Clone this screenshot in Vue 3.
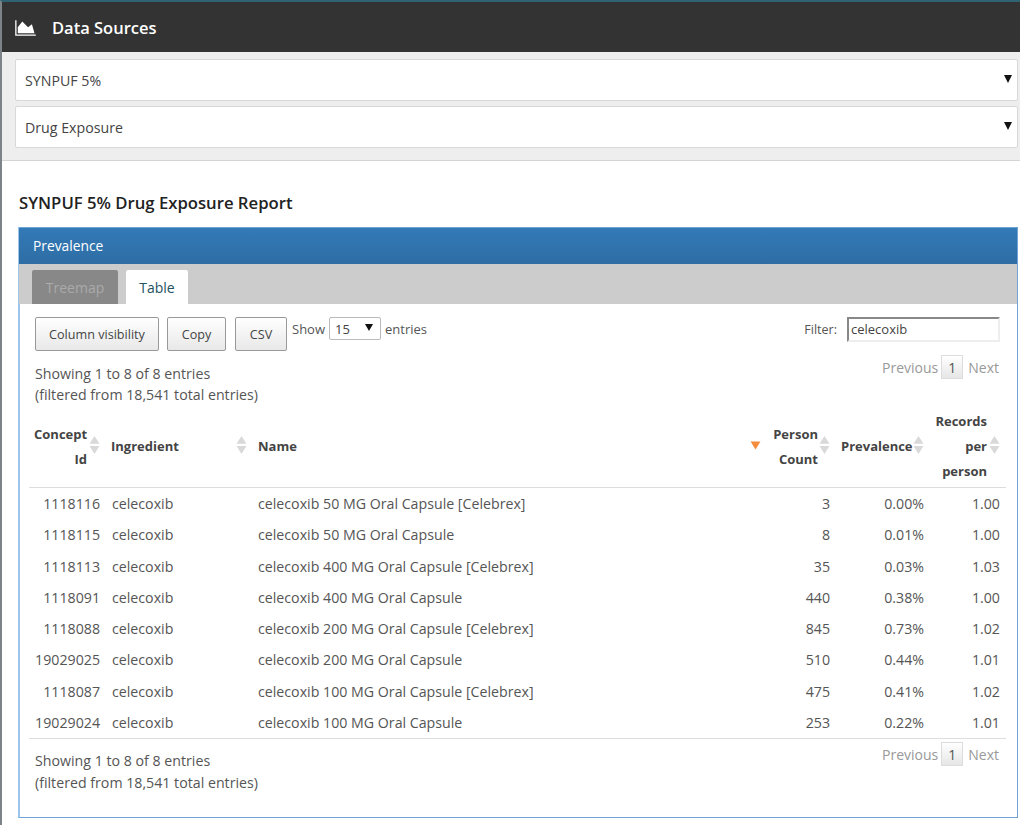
<script setup>
import { ref } from "vue";

// Report rows
const rows = ref([
  { id: 1118116, name: "celecoxib 50 MG Oral Capsule [Celebrex]", count: 3, prev: "0.00%", rec: "1.00" },
  { id: 1118115, name: "celecoxib 50 MG Oral Capsule", count: 8, prev: "0.01%", rec: "1.00" },
  { id: 1118113, name: "celecoxib 400 MG Oral Capsule [Celebrex]", count: 35, prev: "0.03%", rec: "1.03" },
  { id: 1118091, name: "celecoxib 400 MG Oral Capsule", count: 440, prev: "0.38%", rec: "1.00" },
  { id: 1118088, name: "celecoxib 200 MG Oral Capsule [Celebrex]", count: 845, prev: "0.73%", rec: "1.02" },
  { id: 19029025, name: "celecoxib 200 MG Oral Capsule", count: 510, prev: "0.44%", rec: "1.01" },
  { id: 1118087, name: "celecoxib 100 MG Oral Capsule [Celebrex]", count: 475, prev: "0.41%", rec: "1.02" },
  { id: 19029024, name: "celecoxib 100 MG Oral Capsule", count: 253, prev: "0.22%", rec: "1.01" },
]);

const columns = [
  { label: ["Concept", "Id"], cls: "num c-id" },
  { label: ["Ingredient"], cls: "c-ing" },
  { label: ["Name"], cls: "c-name", sorted: true },
  { label: ["Person", "Count"], cls: "num c-count" },
  { label: ["Prevalence"], cls: "num c-prev" },
  { label: ["Records", "per", "person"], cls: "num c-rec" },
];
</script>

<template>
  <div class="page">
    <header class="topbar">
      <svg class="chart-icon" viewBox="0 0 2048 1792" fill="currentColor">
        <path d="M2048 1536v128h-2048v-1536h128v1408h1920zm-384-1024l256 896h-1664v-576l448-576 576 576z" />
      </svg>
      <span class="topbar-title">Data Sources</span>
    </header>

    <div class="selectors">
      <div class="selector"><span>SYNPUF 5%</span><i class="caret"></i></div>
      <div class="selector"><span>Drug Exposure</span><i class="caret"></i></div>
    </div>

    <main class="report">
      <h2 class="report-title">SYNPUF 5% Drug Exposure Report</h2>

      <section class="panel">
        <div class="panel-heading">Prevalence</div>
        <div class="tabs">
          <div class="tab tab-off">Treemap</div>
          <div class="tab tab-on">Table</div>
        </div>

        <div class="panel-body">
          <div class="controls">
            <div class="controls-left">
              <button class="btn btn-col">Column visibility</button>
              <button class="btn btn-copy">Copy</button>
              <button class="btn btn-csv">CSV</button>
              <span class="show">Show</span>
              <div class="length"><span>15</span><i class="caret small"></i></div>
              <span>entries</span>
            </div>
            <div class="filter">
              <span>Filter:</span>
              <div class="filter-input">celecoxib</div>
            </div>
          </div>

          <div class="info-row top">
            <div class="info">Showing 1 to 8 of 8 entries<br />(filtered from 18,541 total entries)</div>
            <div class="paging">
              <span>Previous</span><span class="page-num">1</span><span>Next</span>
            </div>
          </div>

          <table class="grid">
            <thead>
              <tr>
                <th v-for="col in columns" :key="col.label[0]" :class="col.cls">
                  <div v-for="line in col.label" :key="line">{{ line }}</div>
                  <svg v-if="col.sorted" class="sort" viewBox="0 0 12 20">
                    <path d="M0.5 6h11L6 15z" fill="#f58c3c" />
                  </svg>
                  <svg v-else class="sort" viewBox="0 0 12 20">
                    <path d="M6 0l5.5 8.5H.5zM.5 11h11L6 20z" fill="#d9d9d9" />
                  </svg>
                </th>
              </tr>
            </thead>
            <tbody>
              <tr v-for="row in rows" :key="row.id">
                <td class="num">{{ row.id }}</td>
                <td>celecoxib</td>
                <td class="name">{{ row.name }}</td>
                <td class="num">{{ row.count }}</td>
                <td class="num">{{ row.prev }}</td>
                <td class="num">{{ row.rec }}</td>
              </tr>
            </tbody>
          </table>

          <div class="info-row bottom">
            <div class="info">Showing 1 to 8 of 8 entries<br />(filtered from 18,541 total entries)</div>
            <div class="paging">
              <span>Previous</span><span class="page-num">1</span><span>Next</span>
            </div>
          </div>
        </div>
      </section>
    </main>
  </div>
</template>

<style>
html,
body {
  margin: 0;
  background: #fff;
}
</style>

<style scoped>
.page {
  width: 1020px;
  height: 825px;
  overflow: hidden;
  box-sizing: border-box;
  border-top: 2px solid #2f6272;
  border-left: 2px solid #7d8488;
  font-family: "Open Sans", "Liberation Sans", sans-serif;
  font-size: 14.2px;
  color: #555;
}

.topbar {
  height: 50px;
  box-sizing: border-box;
  padding: 1px 0 0 13px;
  background: #333;
  color: #fff;
  display: flex;
  align-items: center;
}

.chart-icon {
  width: 21px;
  height: 18px;
  margin-right: 16px;
}

.topbar-title {
  font-size: 16.5px;
  font-weight: 600;
}

.selectors {
  height: 109px;
  box-sizing: border-box;
  background: #eee;
  border-bottom: 1px solid #d4d4d4;
  padding: 7px 2px 0 13px;
  display: flex;
  flex-direction: column;
  gap: 5px;
}

.selector {
  height: 42px;
  box-sizing: border-box;
  background: #fff;
  border: 1px solid #d8d8d8;
  border-radius: 2px;
  padding: 0 5px 0 9px;
  display: flex;
  align-items: center;
  justify-content: space-between;
  color: #444;
}

.caret {
  width: 0;
  height: 0;
  border-left: 4.5px solid transparent;
  border-right: 4.5px solid transparent;
  border-top: 8px solid #111;
  margin-top: -3px;
}

.caret.small {
  border-left-width: 4px;
  border-right-width: 4px;
  border-top-width: 7px;
}

.report {
  padding: 0 2px 0 16px;
}

.report-title {
  margin: 31px 0 13px 1px;
  font-size: 16.7px;
  line-height: 22px;
  font-weight: 600;
  color: #222;
}

.panel {
  height: 591px;
  box-sizing: border-box;
  border: 1px solid #6fa3d6;
  border-left: 2px solid #9cc4ec;
}

.panel-heading {
  height: 36px;
  box-sizing: border-box;
  margin-left: -1px;
  padding: 0 0 2px 14px;
  background: linear-gradient(#337ab7, #2e6da4);
  color: #fff;
  font-size: 13.8px;
  display: flex;
  align-items: center;
}

.tabs {
  height: 40px;
  background: #ccc;
  margin-left: -1px;
  padding: 6px 0 0 13px;
  box-sizing: border-box;
  display: flex;
  gap: 8px;
}

.tab {
  height: 34px;
  display: flex;
  align-items: center;
  justify-content: center;
  border-radius: 2px 2px 0 0;
  font-size: 14px;
}

.tab-off {
  width: 86px;
  background: #888;
  color: #aaa;
}

.tab-on {
  width: 62px;
  background: #fff;
  color: #23525f;
}

.panel-body {
  padding: 13px 9px 0 9px;
}

.controls {
  display: flex;
  justify-content: space-between;
  padding: 0 8px 0 6px;
  height: 38px;
  font-size: 13px;
}

.controls-left {
  display: flex;
  align-items: flex-start;
}

.btn {
  height: 34px;
  box-sizing: border-box;
  border: 1px solid #999;
  border-radius: 2px;
  background: linear-gradient(#fff, #e8e8e8);
  font: inherit;
  font-size: 12.6px;
  color: #444;
  padding: 0;
  margin-right: 8px;
}

.btn-col {
  width: 124px;
}

.btn-copy {
  width: 59px;
  margin-right: 9px;
}

.btn-csv {
  width: 52px;
  margin-right: 5px;
}

.show {
  margin-right: 4px;
}

.controls-left > span {
  line-height: 24px;
}

.length {
  width: 52px;
  height: 23px;
  box-sizing: border-box;
  border: 1px solid #bbb;
  border-radius: 2px;
  padding: 0 7px 0 5px;
  margin-right: 4px;
  display: flex;
  align-items: center;
  justify-content: space-between;
  color: #444;
}

.filter {
  display: flex;
  gap: 10px;
  align-items: center;
  height: 25px;
  font-size: 12.5px;
}

.filter-input {
  width: 153px;
  height: 25px;
  box-sizing: border-box;
  border: 2px solid #eee;
  border-top-color: #888;
  border-left-color: #888;
  padding-left: 2px;
  line-height: 21px;
  color: #444;
  font-size: 13px;
}

.info-row {
  display: flex;
  justify-content: space-between;
  padding: 0 9px 0 6px;
}

.info-row.top {
  height: 54px;
}

.info {
  line-height: 21px;
  padding-top: 8px;
  color: #555;
}

.paging {
  display: flex;
  align-items: center;
  height: 24px;
  gap: 4px;
  color: #999;
  font-size: 14px;
}

.page-num {
  width: 22px;
  height: 24px;
  box-sizing: border-box;
  margin: 0 1px 0 -1px;
  background: linear-gradient(#fff, #e6e6e6);
  border: 1px solid #ddd;
  color: #555;
  display: flex;
  align-items: center;
  justify-content: center;
}

.grid {
  width: 977px;
  table-layout: fixed;
  border-collapse: separate;
  border-spacing: 0;
}

.grid th {
  position: relative;
  height: 79px;
  box-sizing: border-box;
  padding: 0 18px 3px 5px;
  border-bottom: 1px solid #ddd;
  font-weight: 700;
  font-size: 13px;
  line-height: 25px;
  color: #444;
  text-align: left;
}

.grid th.num {
  text-align: right;
}

.grid th.c-id,
.grid th.c-prev,
.grid th.c-rec {
  padding-right: 19px;
}

.c-id {
  width: 77px;
}

.c-ing {
  width: 147px;
}

.c-count {
  width: 69px;
}

.c-prev {
  width: 94px;
}

.c-rec {
  width: 76px;
}

.sort {
  position: absolute;
  top: 27px;
  right: 6px;
  width: 11px;
  height: 18px;
}

.grid td {
  height: 31.25px;
  box-sizing: border-box;
  padding: 0 6px;
  white-space: nowrap;
  color: #555;
}

.grid td.name {
  padding-left: 5px;
}

.grid td.num {
  text-align: right;
}

.grid tbody tr:last-child td {
  height: 32.25px;
  border-bottom: 1px solid #ddd;
}

.info-row.bottom {
  padding-top: 3px;
}

.info-row.bottom .info {
  padding-top: 8px;
  line-height: 21.5px;
}
</style>
